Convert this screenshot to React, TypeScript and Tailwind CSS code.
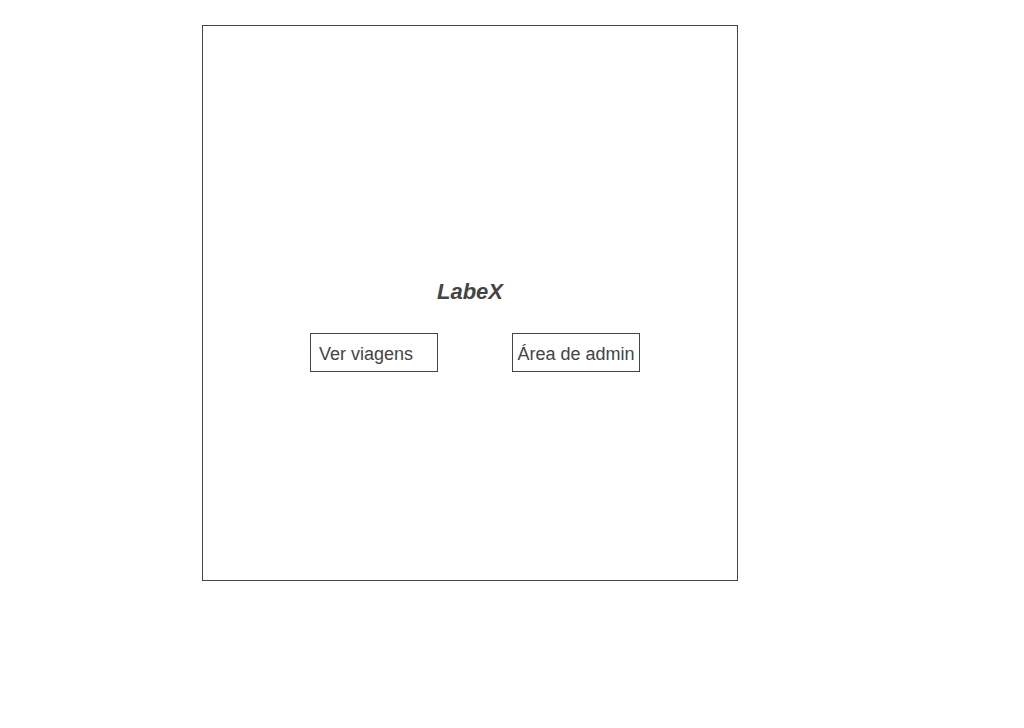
export default function App() {
  return (
    <div className="min-h-screen bg-white pt-[25px] pr-[286px] pb-6 pl-[202px] font-['Liberation_Sans',Arial,sans-serif] text-[#444]">
      <main className="flex min-h-[556px] w-full flex-col items-center border border-[#444] pt-[252px]">
        <h1 className="text-[22px] leading-7 font-bold italic">LabeX</h1>
        <nav className="mt-[27px] ml-[10px] flex gap-[74px]">
          <button type="button" className="h-[39px] w-32 border border-[#444] pt-[3px] pl-2 text-left text-lg whitespace-nowrap">
            Ver viagens
          </button>
          <button type="button" className="h-[39px] w-32 border border-[#444] pt-[3px] text-lg whitespace-nowrap">
            Área de admin
          </button>
        </nav>
      </main>
    </div>
  );
}
